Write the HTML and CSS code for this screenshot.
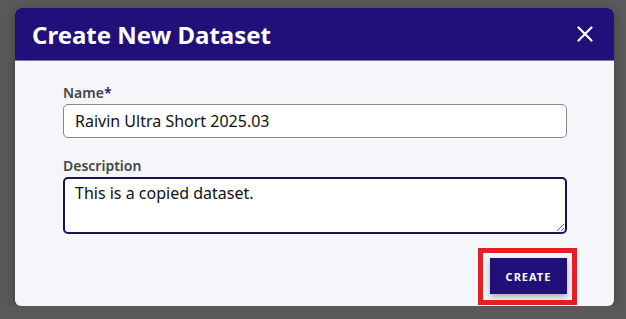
FILE: index.html
```html
<!DOCTYPE html>
<html lang="en">
<head>
    <meta charset="UTF-8">
    <meta name="viewport" content="width=device-width, initial-scale=1.0">
    <title>Create New Dataset</title>
    <link rel="stylesheet" href="styles.css">
</head>
<body>
    <div class="dialog">
        <!-- Kopfzeile -->
        <div class="dialog-header">
            <h1>Create New Dataset</h1>
            <button class="close-btn" type="button" aria-label="Close">
                <svg width="16" height="16" viewBox="0 0 16 16">
                    <path d="M1.5 1.5 L14.5 14.5 M14.5 1.5 L1.5 14.5" stroke="#fff" stroke-width="2.2" stroke-linecap="round"/>
                </svg>
            </button>
        </div>
        <!-- Formular -->
        <form class="dialog-body">
            <div class="form-group">
                <label for="name">Name<span class="req">*</span></label>
                <input type="text" id="name" value="Raivin Ultra Short 2025.03">
            </div>
            <div class="form-group">
                <label for="desc">Description</label>
                <textarea id="desc">This is a copied dataset.</textarea>
            </div>
            <div class="actions">
                <span class="highlight">
                    <button class="create-btn" type="button">CREATE</button>
                </span>
            </div>
        </form>
    </div>
</body>
</html>
```

FILE: styles.css
```css
body {
    font-family: 'Noto Sans', 'Open Sans', sans-serif;
    background: #595959;
    margin: 0;
    padding: 8px 0 0 15px;
}
.dialog {
    width: 599px;
    height: 298px;
    background: #f5f6f9;
    border-radius: 6px;
    overflow: hidden;
    box-shadow: 0 2px 8px rgba(0,0,0,0.3);
}
.dialog-header {
    height: 52px;
    background: #21107a;
    border-bottom: 1px solid #7d79a0;
    display: flex;
    align-items: center;
    justify-content: space-between;
    padding: 0 21px 0 17px;
}
.dialog-header h1 {
    margin: 0;
    color: #fff;
    font-size: 24px;
    font-weight: 700;
}
.close-btn {
    background: none;
    border: none;
    padding: 0;
    width: 16px;
    height: 16px;
    cursor: pointer;
    display: flex;
}
.dialog-body {
    padding: 22px 47px 0 48px;
}
.form-group {
    margin-bottom: 18px;
}
.form-group:nth-child(2) {
    margin-bottom: 0;
}
label {
    display: block;
    font-size: 14px;
    font-weight: 600;
    color: #454545;
    line-height: 20px;
    margin-bottom: 1px;
}
.req {
    color: #21107a;
}
input[type="text"], textarea {
    display: block;
    box-sizing: border-box;
    width: 100%;
    font-family: 'Noto Sans', 'Open Sans', sans-serif;
    font-size: 16px;
    color: #111;
    background: #fff;
    border-radius: 5px;
}
input[type="text"] {
    height: 34px;
    border: 1px solid #8a8a8a;
    padding: 0 11px;
}
textarea {
    height: 57px;
    border: 2px solid #1e0f5c;
    padding: 3px 10px;
    resize: vertical;
}
.actions {
    display: flex;
    justify-content: flex-end;
    margin-top: 24px;
}
.highlight {
    position: relative;
    display: inline-block;
}
.highlight::after {
    content: '';
    position: absolute;
    top: -10px;
    bottom: -11px;
    left: -12px;
    right: -10px;
    border: 5px solid #e61e25;
}
.create-btn {
    display: block;
    width: 77px;
    height: 36px;
    background: #21107a;
    color: #fff;
    border: none;
    font-family: 'Noto Sans', 'Open Sans', sans-serif;
    font-size: 11px;
    font-weight: 700;
    letter-spacing: 1px;
    box-shadow: 0 3px 6px rgba(0,0,0,0.3);
    cursor: pointer;
}
```
